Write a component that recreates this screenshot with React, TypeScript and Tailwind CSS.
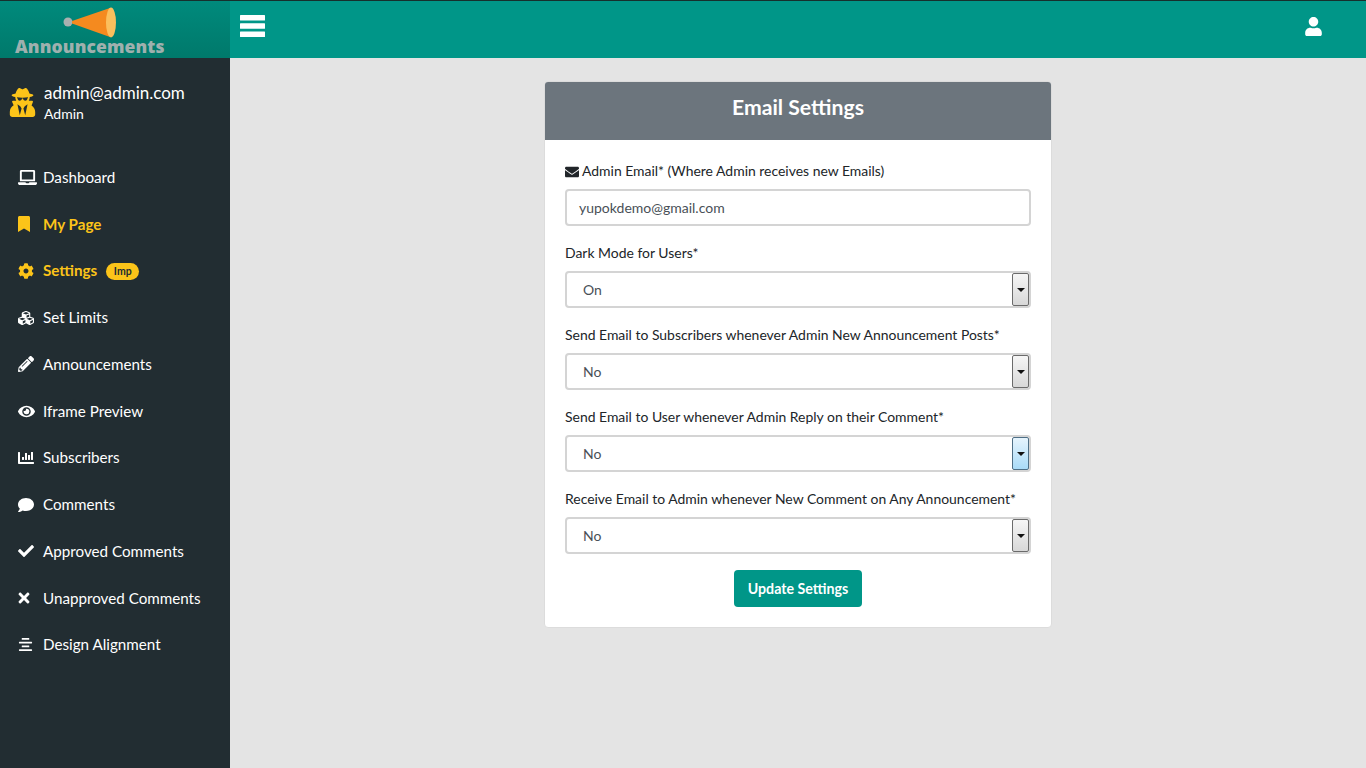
import React from "react";
import { FaUserSecret, FaLaptop, FaBookmark, FaCog, FaCubes, FaPencilAlt, FaEye, FaChartBar, FaComment, FaCheck, FaTimes, FaAlignCenter, FaEnvelope, FaUser } from "react-icons/fa";

const items = [
  { label: "Dashboard", Icon: FaLaptop, size: 19, nudge: "" },
  { label: "My Page", Icon: FaBookmark, active: true, size: 16, nudge: "-ml-[2px]" },
  { label: "Settings", Icon: FaCog, active: true, badge: "Imp", size: 16, nudge: "" },
  { label: "Set Limits", Icon: FaCubes, size: 16, nudge: "" },
  { label: "Announcements", Icon: FaPencilAlt, size: 16, nudge: "" },
  { label: "Iframe Preview", Icon: FaEye, size: 17, nudge: "" },
  { label: "Subscribers", Icon: FaChartBar, size: 16, nudge: "" },
  { label: "Comments", Icon: FaComment, size: 16, nudge: "" },
  { label: "Approved Comments", Icon: FaCheck, size: 16, nudge: "" },
  { label: "Unapproved Comments", Icon: FaTimes, size: 16, nudge: "-ml-[2px]" },
  { label: "Design Alignment", Icon: FaAlignCenter, size: 15, nudge: "" },
];

function FakeSelect({ label, value, focused }: { label: string; value: string; focused?: boolean }) {
  return (
    <div className="mb-[16px]">
      <div className="h-[21px] mb-[8px] leading-[21px] text-[13.94px] text-[#212529]">{label}</div>
      <div className="h-[37px] flex items-center border-2 border-[#d4d4d4] rounded-[4px] bg-white">
        <span className="pl-[16px] flex-1 text-[14px] text-[#495057]">{value}</span>
        <div
          className={
            focused
              ? "w-[17px] h-[33px] border border-[#4f6f86] rounded-[2px] flex items-center justify-center bg-gradient-to-b from-[#e6f4fd] to-[#a9dbf8]"
              : "w-[17px] h-[33px] border border-[#6b6b6b] rounded-[2px] flex items-center justify-center bg-gradient-to-b from-[#f6f6f6] to-[#d8d8d8]"
          }
        >
          <svg width="8" height="4" viewBox="0 0 8 4"><path d="M0 0h8L4 4z" fill="#111" /></svg>
        </div>
      </div>
    </div>
  );
}

export default function App() {
  return (
    <div className="h-[768px] w-full overflow-hidden flex flex-col bg-[#e4e4e4] font-['Lato','Liberation_Sans',sans-serif]">
      <header className="h-[58px] flex shrink-0 bg-[#009688] border-t border-[#16302d]">
        <div className="w-[230px] shrink-0 bg-gradient-to-b from-[#008a7c] to-[#00796b] flex flex-col items-start pl-[15px]">
          <svg width="64" height="32" viewBox="0 0 64 32" className="mt-[6px] ml-[48px]">
            <circle cx="5" cy="15" r="4.5" fill="#a9b0b0" />
            <path d="M9 14 L47 1 L47 30 L9 16.4 Z" fill="#f58a1f" />
            <ellipse cx="48" cy="15.5" rx="5" ry="15" fill="#fbbf5d" />
          </svg>
          <span className="font-['Open_Sans','Liberation_Sans',sans-serif] font-extrabold text-[17.5px] leading-[16px] tracking-[0.12px] text-[#9fb0ae] -mt-[1px]">Announcements</span>
        </div>
        <div className="flex-1 flex items-center justify-between pl-[10px] pr-[43px] pb-[7px]">
          <svg width="25" height="22" viewBox="0 0 25 22" fill="#fff">
            <rect y="0" width="25" height="5.5" rx="0.5" />
            <rect y="8.25" width="25" height="5.5" rx="0.5" />
            <rect y="16.5" width="25" height="5.5" rx="0.5" />
          </svg>
          <FaUser className="text-white" size={19} />
        </div>
      </header>
      <div className="flex flex-1 min-h-0">
        <aside className="w-[230px] shrink-0 bg-[#222d32]">
          <div className="h-[96px] flex items-start pl-[8px] pt-[24px] gap-[7px]">
            <FaUserSecret className="text-[#fcc419] mt-[6px]" size={29} />
            <div>
              <div className="text-white text-[17px] leading-[21px]">admin@admin.com</div>
              <div className="text-white text-[14px] leading-[21px]">Admin</div>
            </div>
          </div>
          <nav>
            {items.map(({ label, Icon, active, badge, size, nudge }) => (
              <div key={label} className={active ? "h-[46.75px] flex items-center text-[#fcc419] font-bold" : "h-[46.75px] flex items-center text-white"}>
                <span className="w-[43px] pl-[18px] flex shrink-0 items-center">
                  <Icon size={size} className={nudge} />
                </span>
                <span className="text-[15.2px]">{label}</span>
                {badge && (
                  <span className="ml-[9px] mt-[2px] w-[33px] h-[17px] rounded-full bg-[#fcc419] text-[#222d32] text-[10.5px] flex items-center justify-center">{badge}</span>
                )}
              </div>
            ))}
          </nav>
        </aside>
        <main className="flex-1 flex justify-center items-start pt-[23px]">
          <div className="w-[508px] bg-white border border-[#dcdcdc] rounded-[4px] overflow-hidden">
            <div className="h-[58px] pb-[6px] bg-[#6c757d] flex items-center justify-center text-white font-bold text-[21.2px]">Email Settings</div>
            <div className="px-[20px] pt-[21px] pb-[20px]">
              <div className="mb-[16px]">
                <div className="h-[21px] mb-[7px] flex items-center gap-[3px] text-[13.94px] text-[#212529]">
                  <FaEnvelope size={14} />
                  <span>Admin Email* (Where Admin receives new Emails)</span>
                </div>
                <div className="h-[37px] flex items-center border-2 border-[#d4d4d4] rounded-[4px] pl-[12px] text-[14px] text-[#495057]">yupokdemo@gmail.com</div>
              </div>
              <FakeSelect label="Dark Mode for Users*" value="On" />
              <FakeSelect label="Send Email to Subscribers whenever Admin New Announcement Posts*" value="No" />
              <FakeSelect label="Send Email to User whenever Admin Reply on their Comment*" value="No" focused />
              <FakeSelect label="Receive Email to Admin whenever New Comment on Any Announcement*" value="No" />
              <div className="flex justify-center">
                <button className="w-[128px] h-[37px] rounded-[4px] bg-[#009688] text-white font-bold text-[14.2px]">Update Settings</button>
              </div>
            </div>
          </div>
        </main>
      </div>
    </div>
  );
}
